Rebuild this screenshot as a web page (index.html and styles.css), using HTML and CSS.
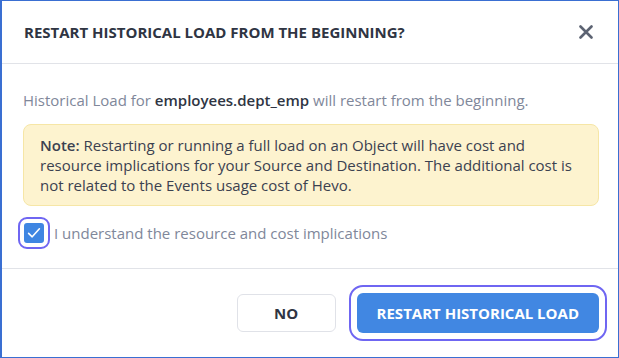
FILE: index.html
```html
<!DOCTYPE html>
<html lang="en">
<head>
    <meta charset="UTF-8">
    <meta name="viewport" content="width=device-width, initial-scale=1.0">
    <title>Restart Historical Load</title>
    <link rel="stylesheet" href="styles.css">
</head>
<body>
    <div class="dialog">
        <div class="dialog-header">
            <h2>RESTART HISTORICAL LOAD FROM THE BEGINNING?</h2>
            <button class="close-btn" aria-label="Close">
                <svg width="14" height="14" viewBox="0 0 14 14">
                    <path d="M1.5 1.5 L12.5 12.5 M12.5 1.5 L1.5 12.5" stroke="#5c6372" stroke-width="2.6" stroke-linecap="round"/>
                </svg>
            </button>
        </div>

        <div class="dialog-body">
            <p class="lead">Historical Load for <b>employees.dept_emp</b> will restart from the beginning.</p>

            <p class="note"><b>Note:</b> Restarting or running a full load on an Object will have cost and resource implications for your Source and Destination. The additional cost is not related to the Events usage cost of Hevo.</p>

            <label class="check-row">
                <span class="checkbox">
                    <svg width="16" height="16" viewBox="0 0 16 16">
                        <path d="M2.6 8.4 L6.2 11.8 L13.4 3.8" fill="none" stroke="#fff" stroke-width="1.6" stroke-linecap="round" stroke-linejoin="round"/>
                    </svg>
                </span>
                <span>I understand the resource and cost implications</span>
            </label>
        </div>

        <div class="dialog-footer">
            <button class="btn btn-plain">NO</button>
            <button class="btn btn-primary">RESTART HISTORICAL LOAD</button>
        </div>
    </div>
</body>
</html>
```

FILE: styles.css
```css
* {
    box-sizing: border-box;
}
body {
    margin: 0;
    font-family: "Open Sans", "Noto Sans", sans-serif;
    background: #fff;
}
.dialog {
    width: 619px;
    height: 358px;
    border: 1px solid #3a6fd2;
    border-left-width: 2px;
    display: flex;
    flex-direction: column;
}
.dialog-header {
    height: 63px;
    border-bottom: 1px solid #e1e3e8;
    display: flex;
    align-items: center;
    justify-content: space-between;
    padding: 0 25px 0 22px;
}
.dialog-header h2 {
    margin: 0;
    font-size: 15px;
    font-weight: 700;
    color: #2f3543;
}
.close-btn {
    background: none;
    border: none;
    padding: 0;
    width: 14px;
    height: 14px;
    display: flex;
    cursor: pointer;
}
.dialog-body {
    height: 205px;
    border-bottom: 1px solid #e1e3e8;
    padding: 26px 19px 0 21px;
}
.lead {
    margin: 0 0 14px;
    font-size: 15px;
    line-height: 20px;
    color: #80879a;
}
.lead b {
    color: #2f3543;
    font-weight: 600;
}
.note {
    margin: 0;
    background: #fdf3cf;
    border: 1px solid #f6e6a6;
    border-radius: 8px;
    padding: 10px 16px;
    font-size: 15px;
    line-height: 20px;
    color: #3b4150;
}
.note b {
    font-weight: 600;
}
.check-row {
    margin-top: 17px;
    display: flex;
    align-items: center;
    gap: 10px;
    font-size: 15px;
    color: #80879a;
    cursor: pointer;
}
.checkbox {
    flex: none;
    width: 20px;
    height: 20px;
    margin-left: 1px;
    border-radius: 3px;
    background: #3f86e2;
    outline: 2px solid #6f66f2;
    outline-offset: 4px;
    display: flex;
    align-items: center;
    justify-content: center;
}
.dialog-footer {
    flex: 1;
    display: flex;
    align-items: center;
    justify-content: flex-end;
    gap: 21px;
    padding: 0 19px 0 20px;
}
.btn {
    font-family: "Open Sans", "Noto Sans", sans-serif;
    font-size: 15px;
    font-weight: 700;
    border-radius: 6px;
    cursor: pointer;
}
.btn-plain {
    width: 99px;
    height: 38px;
    background: #fff;
    border: 1px solid #e0e2e8;
    color: #2f3543;
}
.btn-primary {
    height: 40px;
    padding: 0 20px;
    background: #4187e2;
    border: none;
    color: #fff;
    outline: 2px solid #6f66f2;
    outline-offset: 6px;
}
```
